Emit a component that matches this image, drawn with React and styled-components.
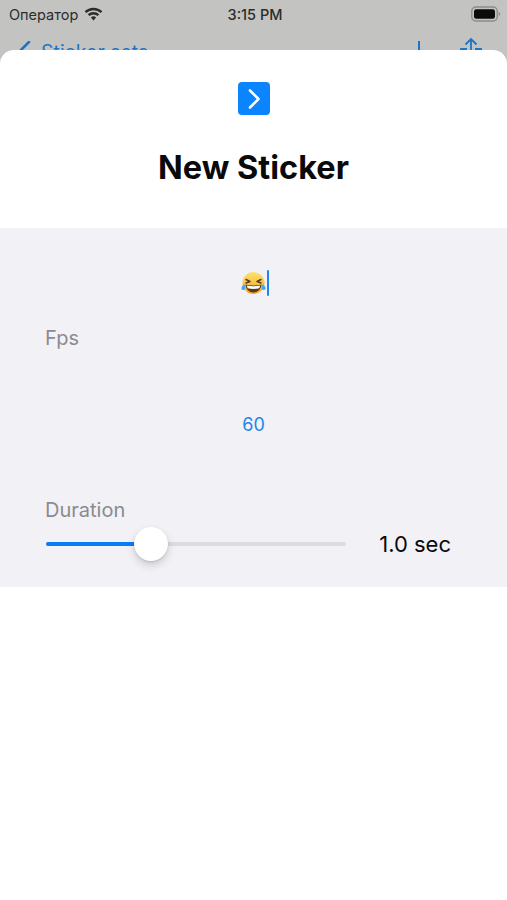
import styled, { createGlobalStyle } from "styled-components";

const GlobalStyle = createGlobalStyle`
  html, body { margin: 0; padding: 0; background: #fff; }
  body { font-family: "Inter", "Liberation Sans", sans-serif; }
`;

const Page = styled.div`
  width: 507px;
  height: 900px;
  overflow: hidden;
  background: #c3c4c2;
  display: flex;
  flex-direction: column;
`;

const Behind = styled.div`
  height: 50px;
  overflow: hidden;
  flex: none;
`;

const StatusBar = styled.div`
  height: 28px;
  padding: 0 6px 0 9px;
  display: grid;
  grid-template-columns: 1fr auto 1fr;
  align-items: center;
  color: #2b2c2b;
  font-size: 14.5px;
`;

const Carrier = styled.div`
  display: flex;
  align-items: center;
  gap: 6px;
`;

const Clock = styled.div`
  font-weight: 500;
  font-size: 14.5px;
`;

const BatteryWrap = styled.div`
  justify-self: end;
  display: flex;
`;

const NavBar = styled.div`
  height: 30px;
  padding: 13px 24px 0 18px;
  display: flex;
  align-items: flex-start;
  justify-content: space-between;
  color: #1f74c6;
  font-size: 19.5px;
`;

const BackLink = styled.div`
  display: flex;
  gap: 9px;
  line-height: 22px;
`;

const NavActions = styled.div`
  display: flex;
  gap: 29px;
  align-items: flex-start;
`;

const Sheet = styled.div`
  flex: 1;
  background: #fff;
  border-radius: 14px 14px 0 0;
`;

const SheetHeader = styled.div`
  height: 178px;
  box-sizing: border-box;
  padding-top: 32px;
  display: flex;
  flex-direction: column;
  align-items: center;
`;

const GoButton = styled.div`
  width: 32px;
  height: 33px;
  border-radius: 4px;
  background: #0a84ff;
  display: flex;
  align-items: center;
  justify-content: center;
`;

const Title = styled.h1`
  margin: 31px 0 0;
  font-size: 32.5px;
  line-height: 44px;
  font-weight: 700;
  color: #0a0a0a;
`;

const Form = styled.div`
  height: 359px;
  box-sizing: border-box;
  background: #f1f1f6;
  padding: 41px 56px 0 45px;
  display: flex;
  flex-direction: column;
`;

const EmojiField = styled.div`
  height: 28px;
  margin-left: 13px;
  display: flex;
  align-items: center;
  justify-content: center;
  gap: 1px;
`;

const Caret = styled.div`
  width: 2px;
  height: 26px;
  background: #1f86f0;
  border-radius: 1px;
`;

const Label = styled.div`
  font-size: 20px;
  line-height: 26px;
  color: #8b8b90;
  margin-top: ${(p) => p.$top}px;
`;

const FpsValue = styled.div`
  margin-top: 61px;
  margin-left: 11px;
  text-align: center;
  color: #1f86e8;
  font-size: 18px;
  line-height: 26px;
`;

const SliderRow = styled.div`
  display: flex;
  align-items: center;
  justify-content: space-between;
  margin-top: 4px;
  height: 34px;
`;

const Track = styled.div`
  position: relative;
  width: 300px;
  height: 4px;
  margin-left: 1px;
  border-radius: 2px;
  background: #dcdcde;
`;

const Fill = styled.div`
  height: 100%;
  border-radius: 2px;
  background: #0a7cf5;
`;

const Thumb = styled.div`
  position: absolute;
  top: -15px;
  width: 34px;
  height: 34px;
  margin-left: -17px;
  border-radius: 50%;
  background: #fff;
  box-shadow: 0 4px 9px rgba(0, 0, 0, 0.16), 0 1px 2px rgba(0, 0, 0, 0.12);
`;

const SliderValue = styled.div`
  font-size: 22px;
  color: #0a0a0a;
  white-space: nowrap;
`;

function Wifi() {
  return (
    <svg width="19" height="14" viewBox="0 0 19 14">
      <path d="M1.5 5.2a11.5 11.5 0 0 1 16 0" fill="none" stroke="#2b2c2b" strokeWidth="2.4" />
      <path d="M4.6 8.2a7 7 0 0 1 9.8 0" fill="none" stroke="#2b2c2b" strokeWidth="2.4" />
      <path d="M6.9 10.6a3.6 3.6 0 0 1 5.2 0L9.5 13.4z" fill="#2b2c2b" />
    </svg>
  );
}

function Battery() {
  return (
    <svg width="30" height="16" viewBox="0 0 30 16">
      <rect x="0.8" y="1" width="25.4" height="14" rx="4" fill="none" stroke="#8c8d8b" strokeWidth="1.4" />
      <rect x="3" y="3.2" width="21" height="9.6" rx="2.2" fill="#0c0c0c" />
      <path d="M27.6 6v4c1-.3 1.6-1 1.6-2s-.6-1.700-1.600-2z" fill="#8c8d8b" />
    </svg>
  );
}

function BackChevron() {
  return (
    <svg width="14" height="22" viewBox="0 0 14 22">
      <path d="M11 1L3 9l8 8" fill="none" stroke="#1f74c6" strokeWidth="2.6" strokeLinecap="round" strokeLinejoin="round" />
    </svg>
  );
}

function Plus() {
  return (
    <svg width="22" height="24" viewBox="0 0 22 24">
      <path d="M11 0v22M0 11h22" stroke="#1f74c6" strokeWidth="2" />
    </svg>
  );
}

function Share() {
  return (
    <svg width="24" height="32" viewBox="0 0 24 32" style={{ marginTop: -4 }}>
      <path d="M12 2v18M6.500 7.500L12 2l5.500 5.500" fill="none" stroke="#1f74c6" strokeWidth="1.800" />
      <path d="M8 12H2v18h20V12h-6" fill="none" stroke="#1f74c6" strokeWidth="1.800" />
    </svg>
  );
}

function Chevron() {
  return (
    <svg width="14" height="22" viewBox="0 0 14 22">
      <path d="M3 2.500L11.500 11 3 19.500" fill="none" stroke="#fff" strokeWidth="2.600" strokeLinecap="round" strokeLinejoin="round" />
    </svg>
  );
}

function LaughEmoji() {
  return (
    <svg width="25" height="25" viewBox="0 0 25 25">
      <defs>
        <linearGradient id="face" x1="0" y1="0" x2="0" y2="1">
          <stop offset="0" stopColor="#fde36b" />
          <stop offset="1" stopColor="#f3a32c" />
        </linearGradient>
      </defs>
      <circle cx="12.500" cy="12" r="11" fill="url(#face)" />
      <path d="M5 8.500l4 2-4 1.500M20 8.500l-4 2 4 1.500" fill="none" stroke="#5b3a17" strokeWidth="1.400" strokeLinecap="round" strokeLinejoin="round" />
      <path d="M4.500 13.500c5 1.300 11 1.300 16 0-.5 5-4 8-8 8s-7.500-3-8-8z" fill="#5b3a17" />
      <path d="M5.800 14.500c4.300 1 9 1 13.400 0-.2 1.200-.6 2-1 2.800-3.800.8-7.600.8-11.400 0-.4-.8-.8-1.600-1-2.800z" fill="#fff" />
      <path d="M3 13c-1.800 2-3 3.500-2.500 5 .4 1.200 2.200 1.500 3.200.6 1-.9 .6-3-.7-5.600z" fill="#4da3ee" />
      <path d="M22 13c1.800 2 3 3.500 2.500 5-.4 1.200-2.200 1.500-3.200.6-1-.9-.6-3 .7-5.600z" fill="#4da3ee" />
    </svg>
  );
}

export default function App() {
  const progress = 35;
  return (
    <>
      <GlobalStyle />
      <Page>
        <Behind>
          <StatusBar>
            <Carrier>
              Оператор
              <Wifi />
            </Carrier>
            <Clock>3:15 PM</Clock>
            <BatteryWrap>
              <Battery />
            </BatteryWrap>
          </StatusBar>
          <NavBar>
            <BackLink>
              <BackChevron />
              Sticker sets
            </BackLink>
            <NavActions>
              <Plus />
              <Share />
            </NavActions>
          </NavBar>
        </Behind>
        <Sheet>
          <SheetHeader>
            <GoButton>
              <Chevron />
            </GoButton>
            <Title>New Sticker</Title>
          </SheetHeader>
          <Form>
            <EmojiField>
              <LaughEmoji />
              <Caret />
            </EmojiField>
            <Label $top={28}>Fps</Label>
            <FpsValue>60</FpsValue>
            <Label $top={59}>Duration</Label>
            <SliderRow>
              <Track>
                <Fill style={{ width: `${progress}%` }} />
                <Thumb style={{ left: `${progress}%` }} />
              </Track>
              <SliderValue>1.0 sec</SliderValue>
            </SliderRow>
          </Form>
        </Sheet>
      </Page>
    </>
  );
}
